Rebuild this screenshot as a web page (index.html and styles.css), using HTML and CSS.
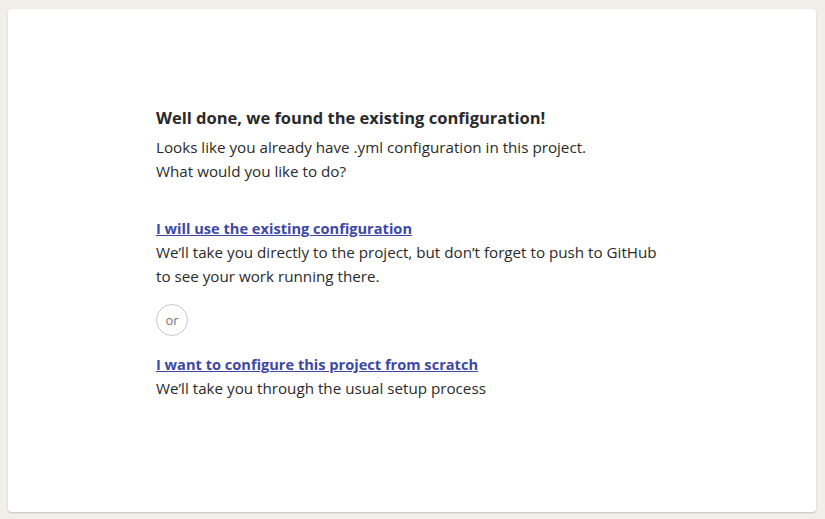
FILE: index.html
```html
<!DOCTYPE html>
<html>
<head>
<meta charset="utf-8">
<link rel="stylesheet" href="styles.css">
</head>
<body>
<div class="card">
  <div class="content">
    <h1 class="title">Well done, we found the existing configuration!</h1>
    <p class="text">Looks like you already have .yml configuration in this project.<br>What would you like to do?</p>
    <div class="option first">
      <a class="link" href="#">I will use the existing configuration</a>
      <p class="text">We’ll take you directly to the project, but don’t forget to push to GitHub<br>to see your work running there.</p>
    </div>
    <div class="or">or</div>
    <div class="option">
      <a class="link" href="#">I want to configure this project from scratch</a>
      <p class="text">We’ll take you through the usual setup process</p>
    </div>
  </div>
</div>
</body>
</html>
```
FILE: styles.css
```css
html, body { margin: 0; padding: 0; }
body {
  background: #f0efea;
  font-family: "Open Sans", "Noto Sans", sans-serif;
  color: #2a2a2a;
  padding: 9px 9px 7px 8px;
  height: 519px;
  box-sizing: border-box;
}
.card {
  background: #fff;
  border-radius: 4px;
  box-shadow: 0 1px 2px rgba(0,0,0,0.2);
  height: 100%;
  box-sizing: border-box;
  padding: 96px 0 0 148px;
}
.title {
  font-size: 16.5px;
  font-weight: 700;
  line-height: 26px;
  margin: 0 0 4px;
}
.text {
  font-size: 15.2px;
  line-height: 24px;
  margin: 0;
}
.option.first { margin-top: 33px; }
.link {
  display: block;
  font-size: 14.6px;
  font-weight: 700;
  line-height: 24px;
  color: #3d47a8;
  text-decoration: underline;
}
.or {
  width: 30px;
  height: 30px;
  border: 1px solid #c5cacd;
  border-radius: 50%;
  display: flex;
  align-items: center;
  justify-content: center;
  font-size: 13px;
  color: #777;
  margin: 16px 0 16px;
}
```
